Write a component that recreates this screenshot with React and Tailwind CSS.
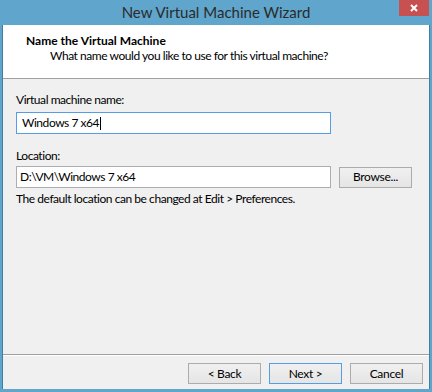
import React from 'react';

const font = { fontFamily: 'Lato, "Noto Sans", sans-serif' };

function WinButton({ children, primary }) {
    return (
        <div
            className={`w-[73px] h-[21px] flex items-center justify-center text-[12px] tracking-[-0.3px] text-black bg-gradient-to-b from-[#f0f0f0] to-[#e5e5e5] border ${primary ? 'border-[#569de5]' : 'border-[#acacac]'}`}
        >
            {children}
        </div>
    );
}

export default function App() {
    return (
        <div className="w-[432px] h-[392px] bg-[#5fa5cc] flex flex-col" style={font}>
            {/* title bar */}
            <div className="relative h-[25px] flex items-center justify-center shrink-0">
                <span className="text-[15px] leading-none text-[#2b2b2b]">New Virtual Machine Wizard</span>
                <div className="absolute right-[3px] top-0 w-[30px] h-[16px] bg-[#c75050] flex items-center justify-center">
                    <svg width="8" height="8" viewBox="0 0 8 8">
                        <path d="M1 1 L7 7 M7 1 L1 7" stroke="#fff" strokeWidth="2" />
                    </svg>
                </div>
            </div>

            {/* window body */}
            <div className="flex-1 ml-[2px] mr-[2px] mb-[3px] border-x border-[#3f7ea6] bg-[#f0f0f0] flex flex-col">
                <div className="h-[54px] bg-white border-b border-[#a0a0a0] pt-[8px] shrink-0">
                    <div className="pl-[23px] text-[12px] leading-[15px] font-bold text-black">Name the Virtual Machine</div>
                    <div className="pl-[47px] text-[12px] leading-[15px] tracking-[-0.45px] text-black">What name would you like to use for this virtual machine?</div>
                </div>

                <div className="px-[13px] pt-[13px] text-[12px] tracking-[-0.45px] text-black">
                    <div className="leading-[16px]">Virtual machine name:</div>
                    <div className="mt-[4px] w-[315px] h-[22px] border border-[#569de5] bg-white flex items-center pl-[5px]">
                        <span>Windows 7 x64</span>
                        <span className="w-[1px] h-[13px] bg-black ml-[1px]" />
                    </div>

                    <div className="mt-[14px] leading-[16px]">Location:</div>
                    <div className="mt-[2px] flex items-center gap-[8px]">
                        <div className="w-[315px] h-[22px] border border-[#abadb3] bg-white flex items-center pl-[3px]">
                            D:\VM\Windows 7 x64
                        </div>
                        <WinButton>Browse...</WinButton>
                    </div>
                    <div className="mt-[3px] leading-[16px]">The default location can be changed at Edit &gt; Preferences.</div>
                </div>

                <div className="flex-1" />

                <div className="border-t border-[#a0a0a0] shadow-[0_1px_0_#ffffff]" />
                <div className="flex justify-end gap-[8px] pr-[6px] pt-[8px] pb-[5px]">
                    <WinButton>&lt; Back</WinButton>
                    <WinButton primary>Next &gt;</WinButton>
                    <WinButton>Cancel</WinButton>
                </div>
            </div>
        </div>
    );
}
